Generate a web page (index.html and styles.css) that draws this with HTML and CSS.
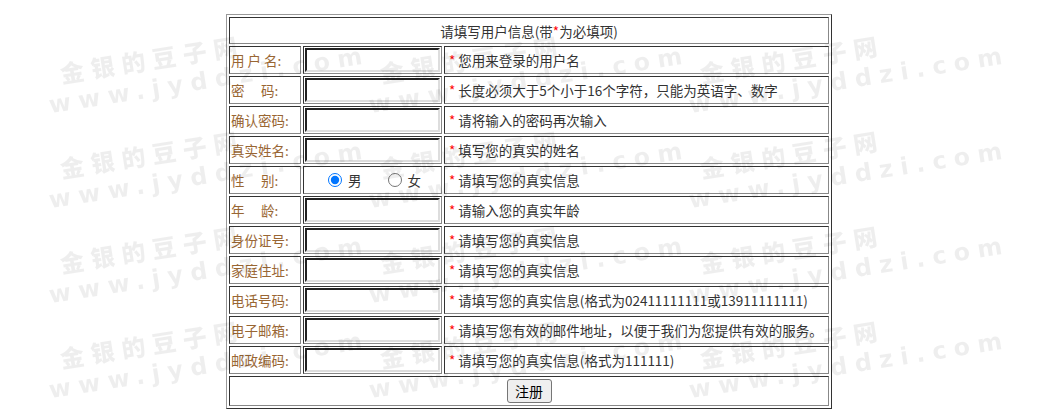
FILE: index.html
```html
<!DOCTYPE html>
<html lang="zh-CN">
<head>
    <meta charset="UTF-8">
    <title>用户注册</title>
    <link rel="stylesheet" href="styles.css">
</head>
<body>
    <form class="reg-form">
        <table class="reg-table">
            <colgroup>
                <col class="col-label">
                <col class="col-input">
                <col class="col-tip">
            </colgroup>
            <tr class="title-row">
                <td colspan="3">请填写用户信息(带<span class="req">*</span>为必填项)</td>
            </tr>
            <tr>
                <td class="label">用 户 名:</td>
                <td class="field"><input type="text"></td>
                <td class="tip"><span class="req">*</span> 您用来登录的用户名</td>
            </tr>
            <tr>
                <td class="label">密&emsp; 码:</td>
                <td class="field"><input type="password"></td>
                <td class="tip"><span class="req">*</span> 长度必须大于5个小于16个字符，只能为英语字、数字</td>
            </tr>
            <tr>
                <td class="label">确认密码:</td>
                <td class="field"><input type="password"></td>
                <td class="tip"><span class="req">*</span> 请将输入的密码再次输入</td>
            </tr>
            <tr>
                <td class="label">真实姓名:</td>
                <td class="field"><input type="text"></td>
                <td class="tip"><span class="req">*</span> 填写您的真实的姓名</td>
            </tr>
            <tr>
                <td class="label">性&emsp; 别:</td>
                <td class="field">
                    <div class="sex-group">
                        <label class="sex-option"><input type="radio" name="sex" checked>男</label>
                        <label class="sex-option"><input type="radio" name="sex">女</label>
                    </div>
                </td>
                <td class="tip"><span class="req">*</span> 请填写您的真实信息</td>
            </tr>
            <tr>
                <td class="label">年&emsp; 龄:</td>
                <td class="field"><input type="text"></td>
                <td class="tip"><span class="req">*</span> 请输入您的真实年龄</td>
            </tr>
            <tr>
                <td class="label">身份证号:</td>
                <td class="field"><input type="text"></td>
                <td class="tip"><span class="req">*</span> 请填写您的真实信息</td>
            </tr>
            <tr>
                <td class="label">家庭住址:</td>
                <td class="field"><input type="text"></td>
                <td class="tip"><span class="req">*</span> 请填写您的真实信息</td>
            </tr>
            <tr>
                <td class="label">电话号码:</td>
                <td class="field"><input type="text"></td>
                <td class="tip"><span class="req">*</span> 请填写您的真实信息(格式为02411111111或13911111111)</td>
            </tr>
            <tr>
                <td class="label">电子邮箱:</td>
                <td class="field"><input type="text"></td>
                <td class="tip"><span class="req">*</span> 请填写您有效的邮件地址，以便于我们为您提供有效的服务。</td>
            </tr>
            <tr>
                <td class="label">邮政编码:</td>
                <td class="field"><input type="text"></td>
                <td class="tip"><span class="req">*</span> 请填写您的真实信息(格式为111111)</td>
            </tr>
            <tr class="submit-row">
                <td colspan="3"><button type="button" class="submit-btn">注册</button></td>
            </tr>
        </table>
    </form>

    <!-- 水印 -->
    <div class="watermark">
        <div class="mark"><span class="mark-cn">金银的豆子网</span><span class="mark-en">www.jyddzi.com</span></div>
        <div class="mark"><span class="mark-cn">金银的豆子网</span><span class="mark-en">www.jyddzi.com</span></div>
        <div class="mark"><span class="mark-cn">金银的豆子网</span><span class="mark-en">www.jyddzi.com</span></div>
        <div class="mark"><span class="mark-cn">金银的豆子网</span><span class="mark-en">www.jyddzi.com</span></div>
        <div class="mark"><span class="mark-cn">金银的豆子网</span><span class="mark-en">www.jyddzi.com</span></div>
        <div class="mark"><span class="mark-cn">金银的豆子网</span><span class="mark-en">www.jyddzi.com</span></div>
        <div class="mark"><span class="mark-cn">金银的豆子网</span><span class="mark-en">www.jyddzi.com</span></div>
        <div class="mark"><span class="mark-cn">金银的豆子网</span><span class="mark-en">www.jyddzi.com</span></div>
        <div class="mark"><span class="mark-cn">金银的豆子网</span><span class="mark-en">www.jyddzi.com</span></div>
        <div class="mark"><span class="mark-cn">金银的豆子网</span><span class="mark-en">www.jyddzi.com</span></div>
        <div class="mark"><span class="mark-cn">金银的豆子网</span><span class="mark-en">www.jyddzi.com</span></div>
        <div class="mark"><span class="mark-cn">金银的豆子网</span><span class="mark-en">www.jyddzi.com</span></div>
    </div>
</body>
</html>
```

FILE: styles.css
```css
/* 页面 */
body {
    margin: 8px;
    padding-left: 16px;
    font-family: "Noto Sans CJK SC", "Microsoft YaHei", sans-serif;
    font-size: 13.5px;
    color: #333;
    background-color: #fff;
}

.reg-form {
    margin: 0;
}

/* 表格 */
.reg-table {
    width: 606px;
    margin: 6px auto 0;
    table-layout: fixed;
    border-collapse: separate;
    border-spacing: 2px;
    border: 1px solid;
    border-color: #999 #333 #333 #999;
}

.col-label {
    width: 72px;
}

.col-input {
    width: 139px;
}

.col-tip {
    width: 385px;
}

.reg-table tr {
    height: 28px;
}

.reg-table td {
    padding: 1px;
    border: 1px solid;
    border-color: #333 #888 #888 #333;
    line-height: 20px;
    vertical-align: middle;
    white-space: nowrap;
}

.title-row {
    text-align: center;
}

.reg-table .title-row {
    height: 27px;
}

.req {
    color: #f00;
}

.label {
    color: #963;
}

.tip {
    padding-left: 4px !important;
}

/* 输入框 */
.field input[type="text"],
.field input[type="password"] {
    display: block;
    box-sizing: border-box;
    width: 135px;
    height: 24px;
    margin: 0;
    padding: 1px 2px;
    border: 2px solid;
    border-color: #222 #ddd #ddd #222;
    font-family: inherit;
    font-size: 13.5px;
    background: #fff;
}

/* 性别 */
.sex-group {
    display: flex;
    justify-content: center;
    align-items: center;
    gap: 26px;
    padding-left: 4px;
}

.sex-option {
    display: flex;
    align-items: center;
}

.sex-option input {
    width: 14px;
    height: 14px;
    margin: 0 6px 0 0;
}

/* 提交 */
.submit-row {
    text-align: center;
}

.reg-table .submit-row {
    height: 30px;
}

.submit-btn {
    width: 45px;
    height: 24px;
    padding: 0;
    border: 1px solid #767676;
    border-radius: 3px;
    background-color: #efefef;
    color: #000;
    font-family: inherit;
    font-size: 14px;
    vertical-align: middle;
}

/* 水印 */
.watermark {
    position: fixed;
    top: 0;
    left: 0;
    right: 0;
    bottom: 0;
    z-index: 5;
    pointer-events: none;
    overflow: hidden;
    display: grid;
    grid-template-columns: repeat(3, 320px);
    grid-auto-rows: 95px;
    padding: 61px 0 0 42px;
    color: rgba(0, 0, 0, 0.065);
    font-weight: bold;
}

.mark {
    transform: rotate(-9deg);
    transform-origin: 0 0;
    white-space: nowrap;
    line-height: 30px;
}

.mark-cn {
    display: block;
    margin-left: 16px;
    font-family: "Noto Sans CJK SC", sans-serif;
    font-size: 24px;
    font-weight: 900;
    letter-spacing: 7px;
}

.mark-en {
    display: block;
    font-family: "DejaVu Sans", sans-serif;
    font-size: 24px;
    letter-spacing: 7.5px;
}
```
